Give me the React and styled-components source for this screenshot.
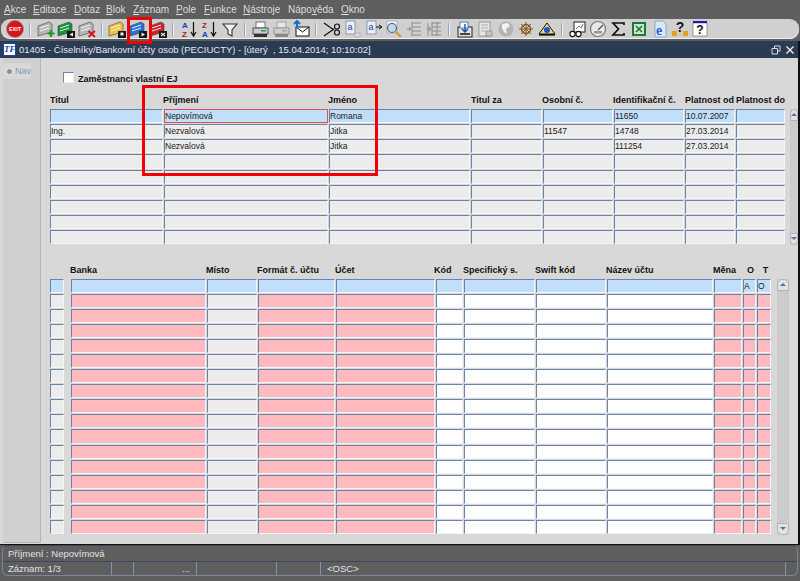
import React from 'react';
import styled, { createGlobalStyle } from 'styled-components';

const GlobalStyle = createGlobalStyle`
  html, body {
    margin: 0;
    height: 100%;
    overflow: hidden;
    background: #5e5e5e;
    font-family: "Liberation Sans", Arial, sans-serif;
  }
  #root { height: 100%; }
`;

const Screen = styled.div`
  height: 100vh;
  display: flex;
  flex-direction: column;
  position: relative;
`;

const MenuBar = styled.nav`
  height: 19px;
  display: flex;
  align-items: center;
  padding: 0 0 0 4px;
  color: #dcdcdc;
  font-size: 10px;
  flex: none;
`;

const MenuItem = styled.span`
  width: ${({ $w }) => $w}px;
  flex: none;
  u { text-underline-offset: 1px; }
`;

const Toolbar = styled.div`
  height: 20px;
  margin: 0 1px 2px 1px;
  padding-left: 3.75px;
  display: flex;
  align-items: center;
  background: #d0d0d0;
  border-radius: 9px;
  box-shadow: inset 0 -1px 0 #efefef;
  flex: none;
`;

const ToolSlot = styled.span`
  width: 20.5px;
  height: 18px;
  display: flex;
  align-items: center;
  justify-content: center;
  flex: none;
  svg { width: 18px; height: 18px; display: block; }
`;

const ToolSep = styled.span`
  width: 10px;
  height: 13px;
  flex: none;
  position: relative;
  &::after {
    content: '';
    position: absolute;
    left: 4px;
    top: 0;
    bottom: 0;
    width: 1px;
    background: #8ea4c0;
    box-shadow: 1px 0 0 #f2f2f2;
  }
`;

const Window = styled.div`
  flex: 1;
  min-height: 0;
  display: flex;
  flex-direction: column;
  border-right: 2px solid #111;
  border-bottom: 1px solid #111;
`;

const TitleBar = styled.header`
  height: 17px;
  flex: none;
  background: #2a3b53;
  color: #e4e8ee;
  font-size: 9.5px;
  display: flex;
  align-items: center;
  padding-left: 3px;
  gap: 3px;
  white-space: pre;
`;

const AppLogo = styled.span`
  width: 13px;
  height: 13px;
  background: #fff;
  border: 1px solid #1c3fa8;
  box-sizing: border-box;
  color: #1c3fa8;
  font: italic bold 9px "Liberation Serif", serif;
  line-height: 11px;
  text-align: center;
  flex: none;
`;

const WindowControls = styled.span`
  margin-left: auto;
  display: flex;
  gap: 4px;
  padding-right: 3px;
  svg { width: 10px; height: 10px; display: block; }
`;

const WindowBody = styled.div`
  flex: 1;
  min-height: 0;
  display: flex;
  background: #d8d8d8;
`;

const NavStrip = styled.aside`
  width: 38px;
  margin: 0 0 1px 3px;
  flex: none;
  background: #cfcfcf;
  border-right: 1px solid #b5b5b5;
  border-bottom: 1px solid #b5b5b5;
  box-sizing: border-box;
  padding-top: 5px;
`;

const NavTab = styled.div`
  width: 28px;
  height: 16px;
  background: #d9d9d9;
  color: #8398b5;
  font-size: 9px;
  display: flex;
  align-items: center;
  gap: 2px;
  padding-left: 3px;
  box-sizing: border-box;
`;

const NavDot = styled.span`
  width: 7px;
  height: 7px;
  border-radius: 50%;
  background: #7f8ea3;
  border: 1px solid #e8e8e8;
  box-sizing: border-box;
`;

const Main = styled.main`
  flex: 1;
  min-width: 0;
  padding: 14px 0 0 9px;
`;

const CheckRow = styled.label`
  display: flex;
  align-items: flex-end;
  height: 12px;
  margin-left: 13px;
  gap: 4px;
  font-size: 9px;
  font-weight: bold;
  color: #111;
`;

const CheckBox = styled.span`
  width: 11px;
  height: 11px;
  margin-bottom: 1px;
  background: #fff;
  box-sizing: border-box;
  border-top: 1px solid #6f87a9;
  border-left: 1px solid #6f87a9;
  border-right: 1px solid #eee;
  border-bottom: 1px solid #eee;
`;

const Section = styled.section`
  display: flex;
  align-items: flex-start;
  margin-top: ${({ $top }) => $top}px;
`;

const Grid = styled.div`
  display: grid;
  grid-template-columns: ${({ $cols }) => $cols};
  column-gap: 1px;
  row-gap: 1px;
  grid-auto-rows: ${({ $row }) => $row}px;
  flex: none;
`;

const Labels = styled.div`
  display: grid;
  grid-template-columns: ${({ $cols }) => $cols};
  column-gap: 1px;
  height: 11px;
  margin-bottom: 3px;
`;

const ColLabel = styled.span`
  font-size: 9px;
  line-height: 11px;
  font-weight: bold;
  color: #111;
  white-space: nowrap;
  margin-left: ${({ $nudge }) => $nudge || 0}px;
  text-align: ${({ $center }) => ($center ? 'center' : 'left')};
`;

const toneColors = {
  current: '#c1dffb',
  gray: '#ececec',
  pink: '#ffbabf',
  white: '#ffffff',
};

const Field = styled.div`
  box-sizing: border-box;
  background: ${({ $tone }) => toneColors[$tone]};
  border-top: 1px solid ${({ $focus }) => ($focus ? '#d9534f' : '#6a83a8')};
  border-left: 1px solid ${({ $focus }) => ($focus ? '#d9534f' : '#6a83a8')};
  border-right: 1px solid ${({ $focus }) => ($focus ? '#d9534f' : '#f6f6f6')};
  border-bottom: 1px solid ${({ $focus }) => ($focus ? '#d9534f' : '#f6f6f6')};
  font-size: 8.5px;
  line-height: 13px;
  color: #222;
  white-space: nowrap;
  overflow: hidden;
  width: ${({ $narrow }) => ($narrow ? '14px' : 'auto')};
`;

const ScrollBar = styled.div`
  width: ${({ $w }) => $w}px;
  height: ${({ $h }) => $h}px;
  flex: none;
  margin-left: ${({ $gap }) => $gap}px;
  margin-top: ${({ $top }) => $top}px;
  display: flex;
  flex-direction: column;
  background: #cccccc;
`;

const ScrollButton = styled.div`
  height: 12px;
  flex: none;
  background: #e2e2e2;
  border: 1px solid #aab4c2;
  box-sizing: border-box;
  border-radius: ${({ $down }) => ($down ? '0 0 5px 5px' : '5px 5px 0 0')};
  position: relative;
  &::after {
    content: '';
    position: absolute;
    left: 50%;
    top: 3px;
    margin-left: -3px;
    border-left: 3px solid transparent;
    border-right: 3px solid transparent;
    ${({ $down }) =>
      $down ? 'border-top: 3px solid #5f7190;' : 'border-bottom: 3px solid #5f7190;'}
  }
`;

const ScrollTrack = styled.div`
  flex: 1;
`;

const StatusBar = styled.footer`
  height: 31px;
  flex: none;
  margin: 0 2px 5px 2px;
  border: 1px solid #7d8796;
  border-top-color: #3b4656;
  border-radius: 6px;
  box-sizing: border-box;
  display: flex;
  flex-direction: column;
  color: #e2e2e2;
  font-size: 9.5px;
`;

const StatusLine = styled.div`
  height: 15px;
  flex: none;
  display: flex;
  align-items: center;
  padding-left: 5px;
  border-bottom: 1px solid #3b4656;
`;

const StatusCells = styled.div`
  flex: 1;
  display: flex;
  align-items: center;
`;

const StatusCell = styled.span`
  width: ${({ $w }) => $w}px;
  height: 100%;
  flex: none;
  box-sizing: border-box;
  padding-left: ${({ $pad }) => $pad || 0}px;
  display: flex;
  align-items: center;
  justify-content: ${({ $end }) => ($end ? 'flex-end' : 'flex-start')};
  padding-right: ${({ $end }) => ($end ? 6 : 0)}px;
  border-right: 1px solid #7f93ad;
  &:last-child { border-right: 0; }
`;

const OverlayBox = styled.div`
  position: absolute;
  box-sizing: border-box;
  border: 3px solid #f00000;
  left: ${({ $x }) => $x}px;
  top: ${({ $y }) => $y}px;
  width: ${({ $w }) => $w}px;
  height: ${({ $h }) => $h}px;
  pointer-events: none;
`;

const Doc = ({ fill }) => (
  <g>
    <path d="M1 6 L12 2 L15 4 L15 12 L1 16 Z" fill={fill} stroke="#444" strokeWidth="0.6" />
    <path d="M3 8 L12 5 M3 11 L12 8" stroke="#fff" strokeWidth="0.9" />
  </g>
);
const BlackBox = ({ mark }) => (
  <g>
    <rect x="10" y="11" width="8" height="7" fill="#161616" />
    {mark === 'play' && <path d="M12.5 12.5 L16 14.5 L12.5 16.5 Z" fill="#eee" />}
    {mark === 'x' && <path d="M12 13 L16 16 M16 13 L12 16" stroke="#eee" strokeWidth="1.1" />}
    {mark === 'save' && <rect x="12.5" y="12.5" width="3" height="3" fill="#eee" />}
    {mark === 'left' && <path d="M16 12.5 L12.5 14.5 L16 16.5 Z" fill="#eee" />}
  </g>
);
const DocLetter = ({ arrow }) => (
  <g>
    <rect x="3" y="1" width="9" height="13" fill="#e9edf6" stroke="#6f7f9c" strokeWidth="0.7" />
    <text x="4.5" y="10" fontSize="9" fill="#2040c0" fontFamily="Liberation Sans">a</text>
    {arrow ? (
      <path d="M12 7 L18 7 M15 5 L18 7 L15 9" stroke="#111" strokeWidth="1" fill="none" />
    ) : (
      <rect x="12" y="13" width="5" height="4" fill="#dde" stroke="#99a" strokeWidth="0.6" />
    )}
  </g>
);
const SortIcon = ({ top, bottom }) => (
  <g fontFamily="Liberation Sans" fontWeight="bold" fontSize="8">
    <text x="2" y="8" fill={top === 'A' ? '#1a3fb0' : '#b01a1a'}>{top}</text>
    <text x="2" y="17" fill={bottom === 'A' ? '#1a3fb0' : '#b01a1a'}>{bottom}</text>
    <path d="M13.5 2 L13.5 15 M11 12 L13.5 16 L16 12" stroke="#111" strokeWidth="1.2" fill="none" />
  </g>
);
const Printer = ({ dim }) => (
  <g opacity={dim ? 0.45 : 1}>
    <rect x="5" y="2" width="9" height="6" fill="#fff" stroke="#445" strokeWidth="0.7" />
    <rect x="2" y="8" width="15" height="6" fill="#c8ccd6" stroke="#333" strokeWidth="0.8" />
    <rect x="3" y="14" width="13" height="3" fill="#333" />
    <rect x="10" y="10" width="5" height="1.5" fill="#2f9a2f" />
  </g>
);
const ListLines = ({ double }) => (
  <g stroke="#8b8b8b" strokeWidth="1" fill="none">
    <path d="M7 3 H16 M7 7 H16 M7 11 H16 M7 15 H16 M7 2 V16" />
    <path d="M2 9 H6 M4 7 L6 9 L4 11" />
    {double && <path d="M3 3 V16 M12 2 V16" />}
  </g>
);

const icons = {
  exit: (
    <g>
      <circle cx="9" cy="9" r="8.5" fill="#d8141c" stroke="#8d8d8d" strokeWidth="0.8" />
      <text x="9" y="11" fontSize="5.5" fontWeight="bold" fill="#fff" textAnchor="middle" fontFamily="Liberation Sans">EXIT</text>
    </g>
  ),
  add: (
    <g>
      <Doc fill="#b5b5b5" />
      <path d="M14 10 V17 M10.5 13.5 H17.5" stroke="#1f9a1f" strokeWidth="2.2" />
    </g>
  ),
  openGreen: (
    <g>
      <Doc fill="#18913a" />
      <BlackBox mark="left" />
    </g>
  ),
  del: (
    <g>
      <Doc fill="#b5b5b5" />
      <path d="M10.5 11 L17 17 M17 11 L10.5 17" stroke="#d81818" strokeWidth="2" />
    </g>
  ),
  saveYellow: (
    <g>
      <Doc fill="#efc23a" />
      <BlackBox mark="save" />
    </g>
  ),
  runBlue: (
    <g>
      <Doc fill="#2d6fd8" />
      <BlackBox mark="play" />
    </g>
  ),
  cancelRed: (
    <g>
      <Doc fill="#c8242c" />
      <BlackBox mark="x" />
    </g>
  ),
  sortAZ: <SortIcon top="A" bottom="Z" />,
  sortZA: <SortIcon top="Z" bottom="A" />,
  filter: <path d="M2 4 H16 L11 10 V16 L7 14 V10 Z" fill="#f2f2f2" stroke="#333" strokeWidth="1.1" />,
  print: <Printer />,
  printDim: <Printer dim />,
  mail: (
    <g>
      <rect x="4" y="7" width="13" height="9" fill="#fff" stroke="#111" strokeWidth="1" />
      <path d="M4 7 L10.5 12 L17 7" fill="none" stroke="#111" strokeWidth="1" />
      <path d="M5 1 L5 8 M2 4 L5 1 L8 4" stroke="#1470d0" strokeWidth="2" fill="none" />
    </g>
  ),
  cut: (
    <g stroke="#111" strokeWidth="1.2" fill="none">
      <path d="M1 3 L11 10 M1 16 L11 9" />
      <circle cx="14" cy="6.5" r="2.5" />
      <circle cx="14" cy="12.5" r="2.5" />
    </g>
  ),
  copy: <DocLetter />,
  paste: <DocLetter arrow />,
  find: (
    <g>
      <rect x="3" y="1" width="10" height="12" fill="#eef0f6" stroke="#99a" strokeWidth="0.6" />
      <circle cx="8" cy="8" r="4.5" fill="#bcd8f4" stroke="#566" strokeWidth="1.2" />
      <path d="M11 11 L17 17" stroke="#c9a030" strokeWidth="2.2" />
    </g>
  ),
  listA: <ListLines />,
  listB: <ListLines double />,
  tray: (
    <g>
      <rect x="2" y="7" width="14" height="10" fill="#dfe3ea" stroke="#222" strokeWidth="1" />
      <rect x="4" y="2" width="8" height="6" fill="#fff" stroke="#3060b0" strokeWidth="0.8" />
      <path d="M9 4 V12 M6 9 L9 12 L12 9" stroke="#1f4fa0" strokeWidth="1.4" fill="none" />
      <rect x="4" y="13" width="10" height="2" fill="#444" />
    </g>
  ),
  page: (
    <g>
      <rect x="3" y="2" width="11" height="14" fill="#e6e6e6" stroke="#9a9a9a" strokeWidth="1" />
      <path d="M5 5 H12 M5 8 H12 M5 11 H9" stroke="#aaa" strokeWidth="1" />
      <rect x="10" y="11" width="6" height="5" fill="#c5c5c5" stroke="#888" strokeWidth="0.7" />
    </g>
  ),
  globe: (
    <g>
      <circle cx="9" cy="9" r="7.5" fill="#b3b3b3" />
      <path d="M5 4 L11 3 L13 6 L9 9 L10 14 L7 12 L5 8 Z" fill="#f2f2f2" />
    </g>
  ),
  wheel: (
    <g stroke="#8a5410" fill="none">
      <circle cx="9" cy="9" r="4.5" strokeWidth="1.4" />
      <path d="M9 2 V16 M2 9 H16 M4 4 L14 14 M14 4 L4 14" strokeWidth="1" />
    </g>
  ),
  triangle: (
    <g>
      <path d="M9 3 L17 14 H1 Z" fill="#f3d77a" stroke="#111" strokeWidth="1" />
      <circle cx="9" cy="10" r="3" fill="#1a56c8" />
      <rect x="1" y="14" width="16" height="1.6" fill="#111" />
    </g>
  ),
  chart: (
    <g>
      <rect x="6" y="2" width="11" height="10" fill="#fff" stroke="#222" strokeWidth="1" />
      <path d="M8 9 L11 6 L13 8 L15 4" stroke="#777" fill="none" />
      <circle cx="4.5" cy="14" r="2.6" fill="#fff" stroke="#111" strokeWidth="1.1" />
      <circle cx="10.5" cy="14" r="2.6" fill="#fff" stroke="#111" strokeWidth="1.1" />
    </g>
  ),
  gauge: (
    <g>
      <circle cx="9" cy="9" r="7.5" fill="#e8e8e8" stroke="#777" strokeWidth="1.2" />
      <path d="M9 10 L14 5" stroke="#444" strokeWidth="1.1" />
      <rect x="5" y="11" width="8" height="2.5" fill="#999" />
    </g>
  ),
  sigma: <path d="M15 5 V3 H4 L9.5 9 L4 15 H15 V13" fill="none" stroke="#111" strokeWidth="1.7" />,
  excel: (
    <g>
      <rect x="2" y="2" width="14" height="14" fill="#1f7a3a" />
      <rect x="4" y="4" width="10" height="10" fill="#cfe6d2" />
      <path d="M6 6 L12 12 M12 6 L6 12" stroke="#1f7a3a" strokeWidth="1.6" />
    </g>
  ),
  ie: (
    <g>
      <path d="M5 1 H13 L16 4 V17 H5 Z" fill="#dbe7f8" stroke="#7f9cc8" strokeWidth="0.8" />
      <text x="9" y="15" fontSize="14" fontWeight="bold" fill="#1c68d0" textAnchor="middle" fontFamily="Liberation Serif">e</text>
    </g>
  ),
  helpLocks: (
    <g>
      <text x="9" y="12" fontSize="14" fontWeight="bold" fill="#111" textAnchor="middle" fontFamily="Liberation Sans">?</text>
      <rect x="1" y="11" width="5" height="5" fill="#e0a020" />
      <rect x="12" y="11" width="5" height="5" fill="#e0a020" />
      <rect x="7" y="13" width="4" height="3" fill="#c9c9c9" />
    </g>
  ),
  helpWin: (
    <g>
      <rect x="2" y="3" width="14" height="13" fill="#fff" stroke="#777" strokeWidth="0.7" />
      <rect x="2" y="1" width="14" height="2" fill="#2a10c8" />
      <text x="9" y="14" fontSize="12" fontWeight="bold" fill="#111" textAnchor="middle" fontFamily="Liberation Sans">?</text>
    </g>
  ),
};

const toolbar = [
  ['exit'],
  ['add', 'openGreen', 'del'],
  ['saveYellow', 'runBlue', 'cancelRed'],
  ['sortAZ', 'sortZA', 'filter'],
  ['print', 'printDim', 'mail'],
  ['cut', 'copy', 'paste', 'find', 'listA', 'listB'],
  ['tray', 'page', 'globe', 'wheel', 'triangle'],
  ['chart', 'gauge', 'sigma', 'excel', 'ie', 'helpLocks', 'helpWin'],
];

const menus = [
  ['', 'A', 'kce', 29],
  ['', 'E', 'ditace', 41],
  ['', 'D', 'otaz', 32],
  ['', 'B', 'lok', 27],
  ['', 'Z', 'áznam', 43],
  ['', 'P', 'ole', 28],
  ['', 'F', 'unkce', 39],
  ['', 'N', 'ástroje', 45],
  ['Nápo', 'v', 'ěda', 53],
  ['', 'O', 'kno', 30],
];

const topCols = [
  { label: 'Titul', w: 113, nudge: 0 },
  { label: 'Příjmení', w: 164, nudge: -1 },
  { label: 'Jméno', w: 141, nudge: -1 },
  { label: 'Titul za', w: 71, nudge: 0 },
  { label: 'Osobní č.', w: 70, nudge: -1 },
  { label: 'Identifikační č.', w: 70, nudge: -1 },
  { label: 'Platnost od', w: 50, nudge: 0 },
  { label: 'Platnost do', w: 49, nudge: 0 },
];

const topRows = [
  ['', 'Nepovímová', 'Romana', '', '', '11650', '10.07.2007', ''],
  ['Ing.', 'Nezvalová', 'Jitka', '', '11547', '14748', '27.03.2014', ''],
  ['', 'Nezvalová', 'Jitka', '', '', '111254', '27.03.2014', ''],
  ...Array(6).fill(Array(8).fill('')),
];

const bottomCols = [
  { label: '', w: 20, tone: 'gray', narrow: true },
  { label: 'Banka', w: 135, tone: 'pink', nudge: -1 },
  { label: 'Místo', w: 50, tone: 'gray', nudge: -1 },
  { label: 'Formát č. účtu', w: 77, tone: 'pink', nudge: -1 },
  { label: 'Účet', w: 99, tone: 'pink', nudge: -1 },
  { label: 'Kód', w: 27, tone: 'white', nudge: -2 },
  { label: 'Specifický s.', w: 71, tone: 'white', nudge: -1 },
  { label: 'Swift kód', w: 70, tone: 'white', nudge: -1 },
  { label: 'Název účtu', w: 106, tone: 'white', nudge: -1 },
  { label: 'Měna', w: 28, tone: 'pink', nudge: -1 },
  { label: 'O', w: 13, tone: 'pink', center: true, nudge: 2 },
  { label: 'T', w: 14, tone: 'pink', center: true, nudge: 3 },
];

const template = (cols) => cols.map((c) => `${c.w}px`).join(' ');

function App() {
  return (
    <Screen>
      <GlobalStyle />
      <MenuBar>
        {menus.map(([before, key, rest, w]) => (
          <MenuItem key={key} $w={w}>
            {before}
            <u>{key}</u>
            {rest}
          </MenuItem>
        ))}
      </MenuBar>

      <Toolbar>
        {toolbar.map((group, i) => (
          <React.Fragment key={group[0]}>
            {i > 0 && <ToolSep />}
            {group.map((name) => (
              <ToolSlot key={name}>
                <svg viewBox="0 0 18 18">{icons[name]}</svg>
              </ToolSlot>
            ))}
          </React.Fragment>
        ))}
      </Toolbar>

      <Window>
        <TitleBar>
          <AppLogo>TF</AppLogo>
          <span>01405 - Číselníky/Bankovní účty osob (PECIUCTY) - [úterý  , 15.04.2014; 10:10:02]</span>
          <WindowControls>
            <svg viewBox="0 0 10 10">
              <path d="M3.5 3 V1 H9 V6 H7 M1 3.5 H6.5 V9 H1 Z" fill="none" stroke="#d8dde5" strokeWidth="1" />
            </svg>
            <svg viewBox="0 0 10 10">
              <path d="M1.5 1.5 L8.5 8.5 M8.5 1.5 L1.5 8.5" stroke="#f0f0f0" strokeWidth="1.4" />
            </svg>
          </WindowControls>
        </TitleBar>

        <WindowBody>
          <NavStrip>
            <NavTab>
              <NavDot />
              Nav
            </NavTab>
          </NavStrip>

          <Main>
            <CheckRow>
              <CheckBox />
              Zaměstnanci vlastní EJ
            </CheckRow>

            <Section $top={11}>
              <div>
                <Labels $cols={template(topCols)}>
                  {topCols.map((c) => (
                    <ColLabel key={c.label} $nudge={c.nudge}>{c.label}</ColLabel>
                  ))}
                </Labels>
                <Grid $cols={template(topCols)} $row={14.125}>
                  {topRows.map((row, r) =>
                    row.map((value, c) => (
                      <Field
                        key={`${r}-${c}`}
                        $tone={r === 0 ? 'current' : 'gray'}
                        $focus={r === 0 && c === 1}
                      >
                        {value}
                      </Field>
                    ))
                  )}
                </Grid>
              </div>
              <ScrollBar $w={8} $h={136} $gap={5} $top={14}>
                <ScrollButton />
                <ScrollTrack />
                <ScrollButton $down />
              </ScrollBar>
            </Section>

            <Section $top={20}>
              <div>
                <Labels $cols={template(bottomCols)}>
                  {bottomCols.map((c, i) => (
                    <ColLabel key={i} $nudge={c.nudge} $center={c.center}>{c.label}</ColLabel>
                  ))}
                </Labels>
                <Grid $cols={template(bottomCols)} $row={14.06}>
                  {Array.from({ length: 17 }).map((_, r) =>
                    bottomCols.map((c, i) => (
                      <Field
                        key={`${r}-${i}`}
                        $tone={r === 0 ? 'current' : c.tone}
                        $narrow={c.narrow}
                      >
                        {r === 0 && c.label === 'O' ? 'A' : r === 0 && c.label === 'T' ? 'O' : ''}
                      </Field>
                    ))
                  )}
                </Grid>
              </div>
              <ScrollBar $w={12} $h={256} $gap={6} $top={14}>
                <ScrollButton />
                <ScrollTrack />
                <ScrollButton $down />
              </ScrollBar>
            </Section>
          </Main>
        </WindowBody>
      </Window>

      <StatusBar>
        <StatusLine>Příjmení : Nepovímová</StatusLine>
        <StatusCells>
          <StatusCell $w={109} $pad={5}>Záznam: 1/3</StatusCell>
          <StatusCell $w={22} />
          <StatusCell $w={63} $end>...</StatusCell>
          <StatusCell $w={80} />
          <StatusCell $w={44} />
          <StatusCell $w={465} $pad={6}>&lt;OSC&gt;</StatusCell>
          <StatusCell $w={11} />
        </StatusCells>
      </StatusBar>

      <OverlayBox $x={142} $y={85} $w={236} $h={91} />
      <OverlayBox $x={127} $y={17} $w={25} $h={27} />
    </Screen>
  );
}

export default App;
